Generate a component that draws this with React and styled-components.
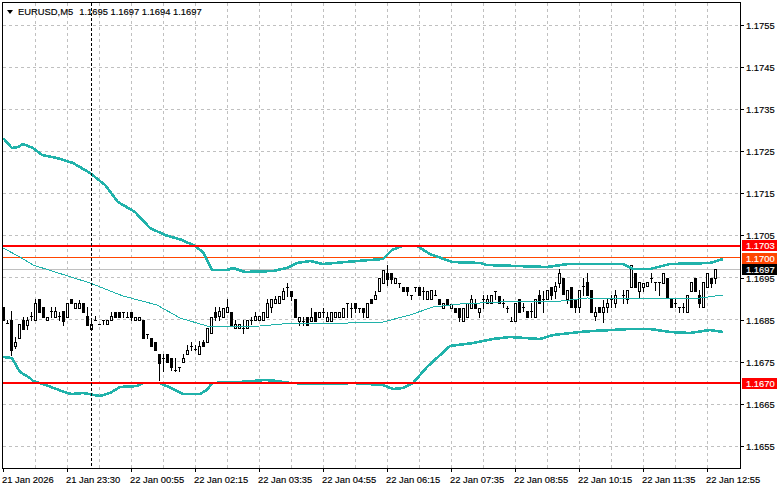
import styled, { createGlobalStyle } from "styled-components";

const GlobalStyle = createGlobalStyle`
  html, body {
    margin: 0;
    background: #fff;
  }
`;

const PLOT_X = 3;
const PLOT_Y = 3;
const PLOT_W = 737;
const PLOT_H = 465;

const PRICE_LEVELS = ["1.1755", "1.1745", "1.1735", "1.1725", "1.1715", "1.1705", "1.1695", "1.1685", "1.1675", "1.1665", "1.1655"];
const GRID_Y = [25, 67, 109, 151, 193, 235, 277, 319, 361, 404, 446];
const GRID_X = Array.from({ length: 22 }, (_, i) => 35 + i * 32);
const TIME_LABELS = [
  "21 Jan 2026", "21 Jan 23:30", "22 Jan 00:55", "22 Jan 02:15", "22 Jan 03:35", "22 Jan 04:55",
  "22 Jan 06:15", "22 Jan 07:35", "22 Jan 08:55", "22 Jan 10:15", "22 Jan 11:35", "22 Jan 12:55",
];

const PRICE_TAGS = [
  { price: "1.1703", y: 240, tone: "#ff0000" },
  { price: "1.1700", y: 253, tone: "#ff4500" },
  { price: "1.1697", y: 264, tone: "#000000" },
  { price: "1.1670", y: 378, tone: "#ff0000" },
];

// body top, body bottom, wick top, wick bottom, hollow (1) or filled (0)
const CANDLES = [
  [307,320,307,320,0],[323,323,320,323,1],[320,350,311,355,0],[342,346,337,348,1],[324,338,324,338,1],[320,329,317,329,0],[320,325,317,329,1],[316,316,312,320,1],
  [303,320,299,320,1],[299,312,299,312,0],[307,317,307,317,0],[317,320,317,320,1],[311,311,307,317,1],[311,317,307,317,1],[316,316,312,320,1],[311,321,311,325,0],
  [303,317,303,317,1],[299,303,299,303,0],[303,308,303,308,1],[303,308,300,308,1],[303,312,303,312,0],[316,325,307,325,0],[324,329,320,329,1],[320,320,316,320,1],
  [324,324,324,324,1],[320,320,320,324,1],[320,324,320,324,1],[316,320,312,320,1],[312,317,312,317,0],[312,317,312,317,0],[312,312,312,317,1],[317,317,312,317,1],
  [312,317,312,320,0],[317,320,317,320,1],[317,320,317,320,1],[320,338,320,338,0],[334,334,334,338,1],[338,346,338,346,0],[342,350,342,350,0],[354,363,354,380,0],
  [358,358,354,371,1],[354,362,354,362,0],[358,367,358,370,0],[370,370,358,371,1],[367,367,367,371,1],[358,362,354,362,1],[350,354,345,354,1],[346,346,342,350,1],
  [349,349,345,350,1],[346,354,341,354,1],[342,346,340,346,0],[328,342,328,342,1],[317,333,317,333,1],[312,317,307,320,0],[311,316,307,320,1],[308,317,308,317,1],
  [307,312,299,312,1],[312,325,312,325,0],[324,328,320,328,1],[324,328,324,328,1],[328,328,320,333,1],[320,328,320,328,1],[320,320,317,324,1],[316,320,312,320,1],
  [316,320,316,320,1],[312,320,312,320,1],[303,317,299,317,1],[299,307,299,312,1],[299,303,296,303,1],[296,303,296,303,1],[291,299,288,299,1],[287,287,283,296,1],
  [291,296,291,300,0],[299,317,299,317,0],[317,321,317,325,1],[321,321,317,325,1],[317,325,317,325,0],[317,321,308,321,1],[312,321,312,321,0],[312,317,312,317,1],
  [312,312,308,317,1],[317,321,312,321,1],[312,321,312,321,1],[312,317,312,317,1],[312,317,312,317,1],[308,317,308,317,1],[303,303,303,317,1],[308,308,303,317,1],
  [303,308,303,312,0],[308,308,308,312,1],[308,312,308,317,0],[303,317,303,317,1],[299,303,299,303,0],[295,299,291,299,1],[278,291,278,291,1],[270,283,270,283,1],
  [273,279,265,285,0],[273,279,273,283,0],[278,283,278,283,1],[283,283,283,287,1],[287,291,287,291,0],[287,291,287,295,0],[295,295,295,299,1],[287,287,287,291,1],
  [287,295,287,295,0],[291,291,287,299,1],[291,299,291,299,1],[290,299,290,299,1],[295,295,290,295,1],[299,304,299,304,0],[303,308,303,308,1],[299,304,299,304,0],
  [304,308,304,308,1],[308,312,308,312,0],[308,317,308,321,0],[308,321,308,321,1],[303,317,303,317,1],[299,308,295,308,1],[303,308,299,308,0],[308,312,308,317,1],
  [299,299,295,308,1],[299,303,295,303,1],[295,303,295,303,1],[291,291,291,299,1],[296,303,296,303,0],[303,303,299,307,1],[308,308,306,312,1],[321,321,317,321,1],
  [303,321,303,321,1],[299,312,299,312,0],[307,307,303,311,1],[311,317,311,317,0],[311,311,303,317,1],[299,317,299,317,1],[295,303,290,303,0],[299,299,291,312,1],
  [290,299,290,299,1],[287,295,287,299,0],[286,291,282,298,1],[273,283,269,287,1],[278,294,278,294,0],[290,299,290,303,1],[287,307,287,307,0],[299,307,299,312,0],
  [290,307,290,312,1],[286,286,278,295,1],[282,295,273,295,0],[290,312,290,312,0],[312,316,307,320,1],[307,312,307,312,0],[307,312,300,322,1],[303,307,298,312,1],
  [299,299,295,307,1],[295,303,290,307,1],[298,298,298,298,1],[295,295,290,303,1],[290,299,290,303,1],[265,287,265,287,1],[273,287,273,287,0],[282,291,282,298,1],
  [283,287,283,291,1],[282,286,282,286,1],[278,278,273,282,1],[282,282,282,290,1],[282,282,282,295,1],[273,283,273,283,1],[278,298,278,298,0],[298,307,298,307,0],
  [303,303,298,307,1],[307,307,307,312,1],[307,307,303,312,1],[295,312,295,312,1],[282,291,282,291,1],[278,291,278,291,0],[295,303,290,307,0],[282,307,282,307,1],
  [273,287,273,287,1],[278,283,278,287,0],[269,278,269,283,1],
];

const UPPER_BAND = [
  [3,138],[12,148],[18,147],[23,144],[33,148],[42,155],[57,158],[73,163],[90,173],[105,185],[118,202],[135,212],[150,228],[165,235],[182,240],
  [195,246],[203,252],[208,262],[212,270],[227,270],[233,268],[245,272],[273,271],[287,268],[297,263],[310,261],[323,264],[357,261],[383,259],
  [392,250],[402,246],[417,246],[430,254],[452,262],[480,263],[487,265],[547,267],[568,264],[623,264],[633,269],[650,269],[670,264],[710,263],[723,259],
];

const MIDDLE_BAND = [
  [3,248],[20,257],[33,265],[90,283],[123,296],[157,305],[180,318],[207,326],[212,327],[260,326],[293,323],[313,324],[383,322],[410,315],[433,307],
  [460,304],[520,301],[553,302],[587,298],[640,299],[663,298],[700,298],[723,295],
];

const LOWER_BAND = [
  [3,357],[12,358],[20,372],[30,378],[33,381],[43,384],[67,393],[72,394],[83,393],[100,396],[110,393],[120,387],[137,386],[143,383],[160,383],
  [173,389],[183,394],[200,394],[207,390],[212,383],[240,382],[265,380],[277,381],[290,383],[327,384],[353,383],[383,385],[393,389],[403,388],
  [413,383],[427,367],[450,346],[473,343],[493,339],[510,337],[540,339],[553,335],[580,332],[593,331],[630,329],[650,329],[670,332],[690,333],
  [710,330],[723,332],
];

const Page = styled.div`
  width: 781px;
  height: 489px;
  padding: 2px 0 0 2px;
  box-sizing: border-box;
  overflow: hidden;
  position: relative;
  background: #fff;
  color: #000;
  font-family: "Liberation Sans", Arial, sans-serif;
  font-size: 9.4px;
  line-height: 11px;
  -webkit-text-stroke: 0.15px #000;
`;

const ChartRow = styled.div`
  display: flex;
`;

const Plot = styled.div`
  position: relative;
  width: 739px;
  height: 467px;
  box-sizing: border-box;
  border: 1px solid #000;
`;

const ChartSvg = styled.svg`
  display: block;
  width: ${PLOT_W}px;
  height: ${PLOT_H}px;
`;

const Legend = styled.div`
  position: absolute;
  left: 4px;
  top: 3px;
  display: flex;
  align-items: center;
  gap: 6px;
  white-space: pre;
`;

const LegendArrow = styled.span`
  width: 0;
  height: 0;
  margin-right: -1px;
  border-left: 3.5px solid transparent;
  border-right: 3.5px solid transparent;
  border-top: 4px solid #000;
`;

const PriceAxis = styled.div`
  display: flex;
  flex-direction: column;
  padding-top: 2.45px;
`;

const PriceRow = styled.div`
  height: 42.1px;
  display: flex;
  align-items: center;
  gap: 2px;
`;

const AxisTick = styled.span`
  flex: none;
  width: 3px;
  height: 1px;
  background: #000;
`;

const TimeAxis = styled.div`
  display: flex;
`;

const TimeCell = styled.div`
  width: 64px;
  flex: none;
  white-space: nowrap;
`;

const TimeTick = styled.div`
  width: 1px;
  height: 3px;
  margin: 0 0 2px 1px;
  background: #000;
`;

const PriceTag = styled.div`
  position: absolute;
  left: 742px;
  top: ${(props) => props.$y}px;
  width: 35px;
  height: 11px;
  padding-left: 4px;
  box-sizing: border-box;
  background: ${(props) => props.$tone};
  color: #fff;
  -webkit-text-stroke: 0.15px #fff;
`;

const toPoints = (list) => list.map((p) => p.join(",")).join(" ");

function Candle({ index, data }) {
  const [top, bottom, wickTop, wickBottom, hollow] = data;
  const center = 3 + index * 4;
  const flat = top === bottom;
  return (
    <g>
      <rect x={center} y={wickTop} width="1" height={wickBottom - wickTop + 1} fill="#000" />
      {flat && <rect x={center - 1} y={top} width="3" height="1" fill="#000" />}
      {!flat && hollow === 1 && (
        <rect x={center - 0.5} y={top + 0.5} width="2" height={bottom - top} fill="#fff" stroke="#000" />
      )}
      {!flat && hollow === 0 && <rect x={center - 1} y={top} width="3" height={bottom - top + 1} fill="#000" />}
    </g>
  );
}

function ChartDrawing() {
  return (
    <ChartSvg viewBox={`${PLOT_X} ${PLOT_Y} ${PLOT_W} ${PLOT_H}`} shapeRendering="crispEdges">
      <g stroke="#c0c0c0" strokeDasharray="3 3">
        {GRID_Y.map((y) => (
          <line key={y} x1={PLOT_X} x2={PLOT_X + PLOT_W} y1={y + 0.5} y2={y + 0.5} />
        ))}
        {GRID_X.map((x) => (
          <line key={x} x1={x + 0.5} x2={x + 0.5} y1={PLOT_Y} y2={PLOT_Y + PLOT_H} />
        ))}
      </g>
      <line x1={PLOT_X} x2={PLOT_X + PLOT_W} y1="269.5" y2="269.5" stroke="#c0c0c0" />
      <line x1={PLOT_X} x2={PLOT_X + PLOT_W} y1="257.5" y2="257.5" stroke="#ff4500" />
      {CANDLES.map((candle, i) => (
        <Candle key={i} index={i} data={candle} />
      ))}
      <g fill="none" stroke="#20b2aa">
        <polyline points={toPoints(UPPER_BAND)} strokeWidth="2.6" />
        <polyline points={toPoints(MIDDLE_BAND)} strokeWidth="1" />
        <polyline points={toPoints(LOWER_BAND)} strokeWidth="2.6" />
      </g>
      <rect x={PLOT_X} y="245" width={PLOT_W} height="2" fill="#ff0000" />
      <rect x={PLOT_X} y="382" width={PLOT_W} height="2" fill="#ff0000" />
      <line x1="91.5" x2="91.5" y1={PLOT_Y} y2={PLOT_Y + PLOT_H} stroke="#000" strokeDasharray="3 2" />
    </ChartSvg>
  );
}

export default function App() {
  return (
    <Page>
      <GlobalStyle />
      <ChartRow>
        <Plot>
          <ChartDrawing />
          <Legend>
            <LegendArrow />
            <span>EURUSD,M5</span>
            <span>1.1695 1.1697 1.1694 1.1697</span>
          </Legend>
        </Plot>
        <PriceAxis>
          {PRICE_LEVELS.map((price) => (
            <PriceRow key={price}>
              <AxisTick />
              <span>{price}</span>
            </PriceRow>
          ))}
        </PriceAxis>
      </ChartRow>
      <TimeAxis>
        {TIME_LABELS.map((label) => (
          <TimeCell key={label}>
            <TimeTick />
            {label}
          </TimeCell>
        ))}
      </TimeAxis>
      {PRICE_TAGS.map((tag) => (
        <PriceTag key={tag.price} $y={tag.y} $tone={tag.tone}>
          {tag.price}
        </PriceTag>
      ))}
    </Page>
  );
}
